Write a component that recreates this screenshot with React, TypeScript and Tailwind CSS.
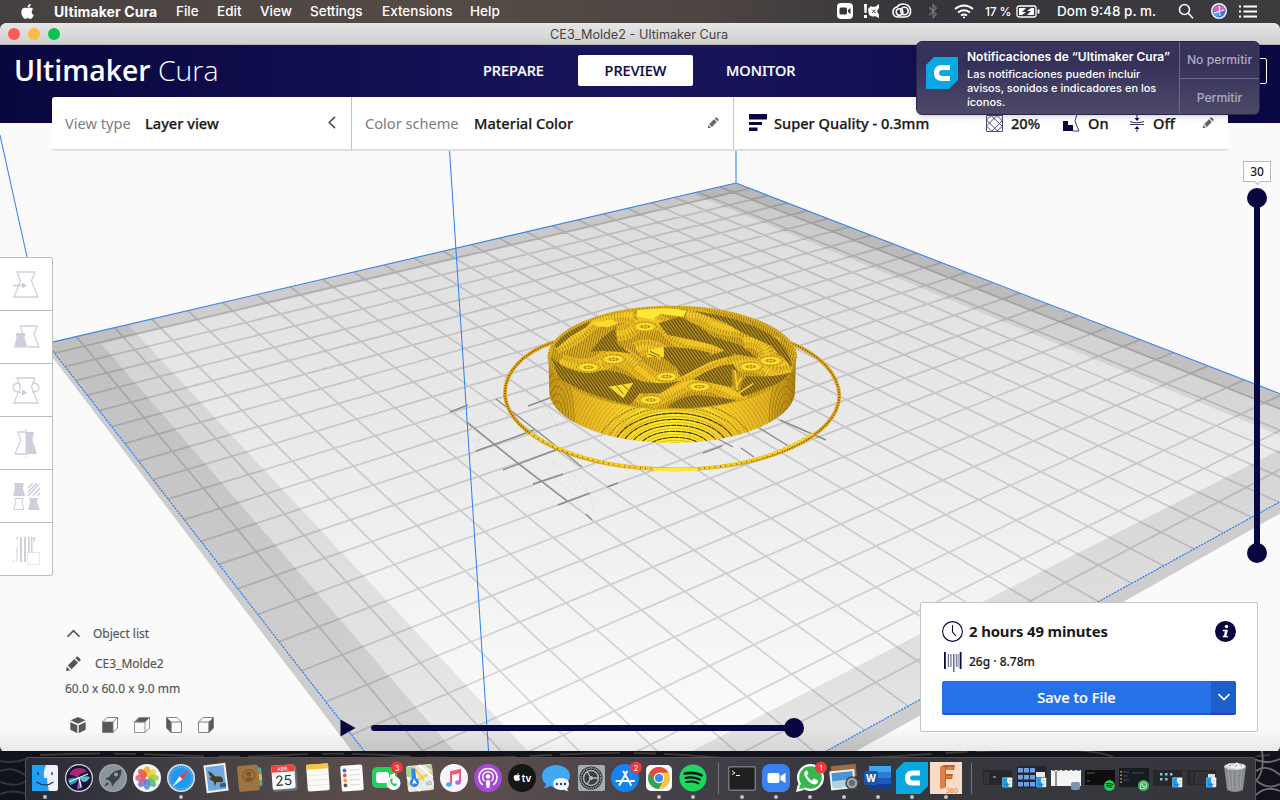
import React from "react";
import { FaApple, FaSpotify, FaWhatsapp, FaBluetoothB } from "react-icons/fa";

type Pt = [number, number];

/* ---------- build plate projection ---------- */
const SIZE = 235;
const B: Pt = [736, 183];
const L: Pt = [47, 343.4];
const F: Pt = [502.6, 929];
const R: Pt = [1395.3, 438.4];

const dx1 = L[0] - F[0], dx2 = R[0] - F[0], sx = B[0] - L[0] + F[0] - R[0];
const dy1 = L[1] - F[1], dy2 = R[1] - F[1], sy = B[1] - L[1] + F[1] - R[1];
const den = dx1 * dy2 - dx2 * dy1;
const g = (sx * dy2 - dx2 * sy) / den;
const h = (dx1 * sy - sx * dy1) / den;

function project(um: number, vm: number): Pt {
  const u = um / SIZE, v = vm / SIZE;
  const w = g * u + h * v + 1;
  return [
    ((L[0] - B[0] + g * L[0]) * u + (R[0] - B[0] + h * R[0]) * v + B[0]) / w,
    ((L[1] - B[1] + g * L[1]) * u + (R[1] - B[1] + h * R[1]) * v + B[1]) / w,
  ];
}
const poly = (pts: Pt[]) =>
  "M" + pts.map(([u, v]) => project(u, v).map((n) => n.toFixed(1)).join(",")).join("L") + "Z";

const gridSteps = Array.from({ length: 23 }, (_, i) => 7.5 + i * 10);
const gridPath = gridSteps
  .map((s) => {
    const [a, b, c, d] = [project(s, 0), project(s, SIZE), project(0, s), project(SIZE, s)];
    return `M${a}L${b}M${c}L${d}`;
  })
  .join("");

const skirt = "M220,157 C120,190 72,255 75,315 C85,440 300,538 580,538 C860,538 1078,440 1078,315 C1075,255 1025,195 928,157";

function Model() {
  const side = "M205,190 L208,310 A369,157 0 0 0 945,310 L948,190 A371,153 0 0 1 205,190Z";
  const dark = [
    "M535,100 L600,80 650,105 700,140 780,165 835,205 750,190 700,165 640,150 565,135Z",
    "M640,62 Q800,85 880,140 Q930,175 935,230 L905,200 870,165 790,130 730,95Z",
    "M552,172 Q620,168 695,190 L655,215 595,238 552,205Z",
    "M330,185 L365,145 405,115 412,160 450,190 Q380,180 330,185Z",
    "M212,195 Q240,235 300,245 Q400,230 460,265 Q520,290 600,272 L540,310 480,310 450,345 Q300,310 235,262Z",
    "M640,268 Q700,225 760,222 L775,245 755,292 Q700,280 640,268Z",
    "M765,300 L800,258 Q880,265 938,245 Q920,275 860,292 L790,320Z",
    "M560,352 Q600,318 650,315 Q720,322 770,330 Q700,355 620,357Z",
    "M215,150 Q270,95 340,85 L320,110 270,140 230,175Z",
    "M590,235 L660,205 740,180 760,195 690,215 600,262Z",
  ];
  const waves = [
    "M225,170 Q280,150 320,110 T460,75",
    "M240,215 Q330,250 400,200 Q450,215 500,255 T620,250 Q690,210 740,200",
    "M290,235 Q350,240 395,185 Q440,195 470,225",
    "M410,130 Q450,130 470,100 T560,110 Q580,150 640,160 T745,180",
    "M620,75 Q660,75 690,95 T790,120 Q830,160 900,165",
    "M470,180 Q500,160 550,190",
    "M500,340 Q560,310 610,285 T760,310 L800,320",
    "M720,245 Q800,190 860,240 Q890,270 930,240",
    "M380,290 Q440,280 480,320",
    "M790,150 Q850,145 860,190 T930,215",
  ];
  return (
    <g transform="translate(480,290) scale(0.33333)">
      <path d={skirt} fill="none" stroke="#dfa81f" strokeWidth="11" />
      <path d={skirt} fill="none" stroke="#4b3b0c" strokeWidth="5" strokeDasharray="3 5" opacity=".8" />
      <path d="M150,430 Q330,538 580,538 Q830,538 1000,430" fill="none" stroke="#f2cf2a" strokeWidth="9" strokeDasharray="13 3" />
      <path d="M522,539 H652" stroke="#ffe735" strokeWidth="10" />
      <path d={side} fill="url(#side)" />
      <g clipPath="url(#sideClip)" fill="none">
        {Array.from({ length: 26 }, (_, i) => (
          <ellipse key={`t${i}`} cx="585" cy="480" rx={160 + i * 10} ry={100 + i * 12}
            stroke="#9a7409" strokeWidth="2.4" strokeDasharray="5 3" opacity=".75" />
        ))}
        {Array.from({ length: 7 }, (_, i) => (
          <ellipse key={`h${i}`} cx="585" cy="480" rx={48 + i * 24} ry={11 + i * 18}
            stroke="#dcaa1a" strokeWidth="2.500" />
        ))}
        {Array.from({ length: 8 }, (_, i) => (
          <ellipse key={`d${i}`} cx="585" cy="480" rx={60 + i * 25} ry={20 + i * 18}
            stroke="#3d3205" strokeWidth={i < 6 ? 3.400 : 2.600} strokeDasharray={i < 6 ? "16 1.500" : "7 3"} opacity={i < 6 ? 1 : 0.75} />
        ))}
        {Array.from({ length: 6 }, (_, i) => (
          <g key={i} stroke="#5a4508" strokeWidth="2.2" opacity=".55">
            <ellipse cx="232" cy="385" rx={10 + i * 8} ry={30 + i * 22} />
            <ellipse cx="918" cy="385" rx={10 + i * 8} ry={30 + i * 22} />
          </g>
        ))}
      </g>
      <ellipse cx="577" cy="204" rx="370" ry="152" fill="#dbab22" />
      <g clipPath="url(#topClip)">
        <rect x="200" y="40" width="760" height="330" fill="url(#fine)" />
        {waves.map((d, i) => (
          <g key={i} fill="none">
            <path d={d} stroke="#ebbb24" strokeWidth="46" />
            <path d={d} stroke="#4a390a" strokeWidth="40" strokeDasharray="2.5 6" opacity=".38" />
            <path d={d} stroke="#f3cb29" strokeWidth="16" strokeDasharray="6 3" />
          </g>
        ))}
        {dark.map((d, i) => (
          <g key={i}>
            <path d={d} fill="#b8921f" />
            <path d={d} fill="url(#hatch)" />
          </g>
        ))}
        <path d="M470,62 Q520,45 620,62 L610,80 540,72 520,88 472,80Z" fill="#ffe832" />
        <path d="M335,98 L395,88 415,100 385,112 350,108Z M455,112 Q490,95 540,110 Q500,128 455,112Z M505,180 L550,170 552,200 500,202Z M385,290 L460,278 430,325Z" fill="#fadc2d" />
        <path d="M392,295 L415,318 M410,288 L430,312 M428,284 L445,300 M510,184 L540,198 M505,192 L530,201" stroke="#745b0c" strokeWidth="3" />
        {([[560, 260], [658, 290], [812, 230], [495, 110], [400, 208], [325, 232], [512, 330], [872, 212]] as Pt[]).map(([x, y], i) => (
          <g key={i} fill="none" stroke="#6b530a" strokeWidth="2" strokeDasharray="6 4">
            <ellipse cx={x} cy={y} rx="42" ry="17" fill="#edc126" stroke="none" />
            <ellipse cx={x} cy={y} rx="36" ry="14" />
            <ellipse cx={x} cy={y} rx="23" ry="8" stroke="#ffe933" strokeWidth="5" strokeDasharray="none" />
            <ellipse cx={x} cy={y} rx="13" ry="4" />
          </g>
        ))}
        <path d="M755,235 L790,260 778,310 758,290Z" fill="#c4951d" />
        <path d="M765,240 L772,300 M785,262 L768,290 M775,310 L820,280" stroke="#f6d12b" strokeWidth="5" />
      </g>
      <path d="M206,204 A371,153 0 0 1 948,204" fill="none" stroke="#e8b924" strokeWidth="8" />
      <path d="M206,204 A371,153 0 0 1 948,204" fill="none" stroke="#544208" strokeWidth="6" strokeDasharray="2.5 5" opacity=".5" />
      <path d="M206,204 A371,153 0 0 0 948,204" fill="none" stroke="#c79a1c" strokeWidth="2.500" />
    </g>
  );
}

function Scene() {
  const plate: Pt[] = [[0, 0], [SIZE, 0], [SIZE, SIZE], [0, SIZE]];
  return (
    <svg className="absolute inset-0 h-full w-full" viewBox="0 45 1280 706" aria-hidden="true">
      <defs>
        <linearGradient id="plate" gradientUnits="userSpaceOnUse" x1="0" y1="183" x2="0" y2="751">
          <stop offset="0" stopColor="#dadada" />
          <stop offset=".35" stopColor="#e7e7e7" />
          <stop offset=".7" stopColor="#f2f2f2" />
          <stop offset="1" stopColor="#fcfcfc" />
        </linearGradient>
        <linearGradient id="side" x1="0" x2="1" y1="0" y2="0">
          <stop offset="0" stopColor="#b98c14" />
          <stop offset=".1" stopColor="#e2b021" />
          <stop offset=".3" stopColor="#f6cf29" />
          <stop offset=".5" stopColor="#fff030" />
          <stop offset=".7" stopColor="#f6cf29" />
          <stop offset=".9" stopColor="#e0ae21" />
          <stop offset="1" stopColor="#a87f12" />
        </linearGradient>
        <linearGradient id="vignette" x1="0" x2="0" y1="0" y2="1">
          <stop offset="0" stopColor="#000" stopOpacity="0" />
          <stop offset="1" stopColor="#000" stopOpacity=".07" />
        </linearGradient>
        <pattern id="hatch" width="8" height="8" patternUnits="userSpaceOnUse" patternTransform="rotate(-35)">
          <rect width="3.6" height="8" fill="#4d3d0a" opacity=".9" />
        </pattern>
        <pattern id="fine" width="7" height="7" patternUnits="userSpaceOnUse" patternTransform="rotate(12)">
          <rect width="2.5" height="7" fill="#6d540c" opacity=".6" />
        </pattern>
        <clipPath id="sideClip"><path d="M205,190 L208,310 A369,157 0 0 0 945,310 L948,190 A371,153 0 0 1 205,190Z" /></clipPath>
        <clipPath id="topClip"><ellipse cx="577" cy="204" rx="370" ry="152" /></clipPath>
      </defs>
      <rect x="0" y="45" width="1280" height="706" fill="#fafafa" />
      <path d="M47,343 V350 L352,751 502,948 860,749 1123,602 1280,513.5 1400,446 V430Z" fill="#cdcdcd" />
      <path d={poly(plate)} fill="url(#plate)" />
      <path fillRule="evenodd" fill="#000" opacity=".09"
        d={poly(plate) + poly([[8, 8.5], [223.5, 8.5], [223.5, 222.5], [8, 222.5]])} />
      <path fill="#000" opacity=".075"
        d={poly([[0, 0], [20, 0], [20, SIZE], [0, SIZE]]) + poly([[214, 0], [SIZE, 0], [SIZE, SIZE], [214, SIZE]])} />
      <path d={gridPath} stroke="#000" strokeOpacity=".14" strokeWidth="1.8" fill="none" />
      <path d={`M${project(SIZE, 0)}L${B}L${R}`} fill="none" stroke="#3b82e8" strokeWidth="1.1" />
      <path d={`M${L}L${F}L${R}`} fill="none" stroke="#2f80f0" strokeWidth="1.200" strokeDasharray="2.200 1" />
      <path d="M0,135 L27,257 M449.500,150 L488.500,751 M736,150 V183" stroke="#2f7df0" strokeWidth="1" fill="none" />
      <g stroke="#8c8c8c" strokeWidth="1.4" fill="none">
        <path d="M467,422 L516,462 567,501 M496,399 L528,424 560,449 582,467 M476,451 L534,430 M503,470 L558,449 M533,484 L563,474 M558,505 L590,493 M586,514 L592,520 M528,406 L558,395 M607,487 L618,483 M450,412 L468,405 M753,424 L790,447 M780,420 L826,440 M718,439 L733,447 M703,453 L722,446 M741,448 L754,457" />
      </g>
      <g stroke="#c9c9c9" strokeWidth="1" strokeDasharray="1 2" fill="none">
        <path d="M470,458 Q480,440 492,412 M552,462 Q590,480 594,512 M545,472 Q575,490 582,512 M455,440 H480 M540,400 Q556,418 558,432" />
      </g>
      <Model />
      <rect x="0" y="728" width="1280" height="23" fill="url(#vignette)" />
    </svg>
  );
}

/* ---------- small icons ---------- */
const Pencil = ({ className = "" }: { className?: string }) => (
  <svg viewBox="0 0 16 16" className={className} fill="currentColor"><path d="M1 15l.8-4.2 3.6 3.5L1 15zM2.8 9.500l6.500-6.500 3.800 3.800-6.500 6.500zM10.300 2l1.300-1.300q.7-.6 1.400 0L15.400 3q.6.700 0 1.400L14.100 5.800z" /></svg>
);
const Chevron = ({ d, className = "" }: { d: string; className?: string }) => (
  <svg viewBox="0 0 12 12" className={className} fill="none" stroke="currentColor" strokeWidth="1.6"><path d={d} /></svg>
);

const trap = "M4 1h18l-3.500 9L25 26H1l6.500-16z";
const tools: React.ReactNode[] = [
  <g key="m"><path d={trap} fill="none" stroke="#d0cfdd" strokeWidth="1.300" /><path d="M0 14.500h10" stroke="#c9c8d8" strokeWidth="1.300" /><path d="M9 11.700l5 2.800-5 2.800z" fill="#c9c8d8" /></g>,
  <g key="s"><path d="M7 2h17l-3 8 5 13H14M10 10L7 2" fill="none" stroke="#d0cfdd" strokeWidth="1.300" /><path d="M2.500 9h10l-1 5 3 9.500H1l2.500-9.500z" fill="#d0cedd" /></g>,
  <g key="r"><path d={trap} fill="none" stroke="#d0cfdd" strokeWidth="1.300" /><path d="M7 6Q0 6 0 10.500T8 15.500M19 6q7 0 7 4.500t-7 4.500" fill="none" stroke="#d0cfdd" strokeWidth="1.300" /><path d="M9 12.500l5 3-5 3z" fill="#c9c8d8" /></g>,
  <g key="f"><path d="M13 2H5l2.500 8L2 24h11" fill="none" stroke="#d0cfdd" strokeWidth="1.300" /><path d="M13 2h8l-1.500 8L24 24H13z" fill="#d0cedd" /><path d="M13-1v28" stroke="#d0cedd" /></g>,
  <g key="p" fill="#d0cedd"><path d="M1 0h10l-1 5 2 8H0l2-8zM16 15h9l-1 4 3 8H15l2-8z" /><path d="M2 15.500h8l-1 4 2 7H.800l2-7z" fill="none" stroke="#d0cedd" /><path d="M15 5l5-5M15 9l9-9M15 13L26 1M20 13l7-8M24 13l3-3" stroke="#d0cedd" strokeWidth="1.500" /></g>,
  <g key="b" fill="#d0cedd"><path d="M3 1h2v4zM7 1h2v25H7zM11 1h2v25h-2zM15 1h1.800v20H15zM18 1h1.500v15H18zM20.500 1h2l-1 5h-1zM4.500 8v18H3.500V13zM1 22v4H0z" /><path d="M14.500 16.500h12v12h-12z" fill="#fff" stroke="#c5c3d5" strokeDasharray="1 1.500" /></g>,
];

/* ---------- dock ---------- */
const Sq = ({ x = 1, y = 1, w = 26, h: hh = 26, r = 2, fill }: { x?: number; y?: number; w?: number; h?: number; r?: number; fill: string }) => (
  <rect x={x} y={y} width={w} height={hh} rx={r} fill={fill} />
);
const Badge = ({ n }: { n: string }) => (
  <g><circle cx="25" cy="3.500" r="6" fill="#f0373c" /><text x="25" y="6.500" fontSize="8" fill="#fff" textAnchor="middle">{n}</text></g>
);
const finder = (
  <g><Sq fill="#eef2f6" /><path d="M1 3q0-2 2-2h12q-3 7-2 13h3q0 6 2 13H3q-2 0-2-2z" fill="#1f9ff5" /><path d="M7 8v3M21 8v3M5.500 18q8.500 6 17 0" fill="none" stroke="#1c2a4a" strokeWidth="1.200" /></g>
);
const miniFinder = <g transform="translate(19,13) scale(.38)">{finder}</g>;
const petals = ["#f7a325", "#e9d431", "#9ccb3c", "#54b57a", "#4b8fd6", "#8a6cc0", "#d95a86", "#ef5434"];

type DockItem = { id: string; dot?: boolean; art: React.ReactNode };
const apps: DockItem[] = [
  { id: "finder", dot: true, art: finder },
  { id: "siri", art: <g><circle cx="14" cy="14" r="14" fill="#d8d8df" /><circle cx="14" cy="14" r="12.800" fill="#1c1433" /><path d="M4 11q3-7 10-7 6 0 8 4-8 0-9 6-5-4-9-3z" fill="#a62a78" /><path d="M3 15q6-2 11-1-3 6-9 7z" fill="#2a9fae" /><path d="M14 14q6-3 11-1-2 5-7 5z" fill="#55b9d8" /><path d="M14 14q3 5 3 10l-5 1z" fill="#8f5ad0" /><path d="M4 18l9-4 10-4M14 14l2 9" stroke="#e6f6ff" strokeWidth="1.300" fill="none" /></g> },
  { id: "launchpad", art: <g><circle cx="14" cy="14" r="14" fill="#a2aaaf" /><circle cx="14" cy="14" r="12.800" fill="#8b9499" /><path d="M22.500 5.500q-8 .5-12 7L6 15l3.500 1 3 3 .5 4 3-4.500q6.500-4 6.500-13zM8 18l-3 5 5-3z" fill="#3c4347" /><circle cx="17" cy="10.500" r="2" fill="#98a1a6" /></g> },
  { id: "photos", art: <g><circle cx="14" cy="14" r="14" fill="#f6f6f4" />{petals.map((c, i) => <ellipse key={c} cx="14" cy="7.500" rx="3.400" ry="5.300" fill={c} opacity=".85" transform={`rotate(${i * 45} 14 14)`} />)}</g> },
  { id: "safari", dot: true, art: <g><circle cx="14" cy="14" r="14" fill="#dbe3ea" /><circle cx="14" cy="14" r="12.500" fill="#2098ee" /><circle cx="14" cy="14" r="11" fill="none" stroke="#a9dcfb" strokeWidth="1.500" strokeDasharray=".6 1.500" /><path d="M23 5L12.500 12.300l3 3z" fill="#f0403a" /><path d="M5 23l7.500-10.700 3 3z" fill="#f5f5f5" /></g> },
  { id: "mail", art: <g transform="rotate(-7 14 14)"><Sq x={3} y={0} w={22} h={28} r={0} fill="#f1f1ee" /><Sq x={5} y={2} w={18} h={24} r={0} fill="#6fa9dd" /><path d="M7 6q4 2 6 6l6 1q3 3 1 6l-6-1-2 4-1-5q-3-1-4-4l3 0q-3-3-3-7z" fill="#4d3a25" /><path d="M17 20h6v4h-6z" fill="#2d5e91" /></g> },
  { id: "contacts", art: <g transform="rotate(-5 14 14)"><Sq x={22} y={4} w={4} h={19} fill="#55a99b" /><path d="M22 11h4v6h-4z" fill="#e8b23c" /><Sq x={2} y={1} w={21} h={26} fill="#9f7440" /><circle cx="13" cy="11.500" r="6" fill="none" stroke="#7b5730" /><circle cx="13" cy="10" r="2.500" fill="#7b5730" /><path d="M9 15q4-4 8 0l-2 2h-4z" fill="#7b5730" /></g> },
  { id: "calendar", art: <g transform="rotate(-4 14 14)"><Sq x={2} y={2} w={25} h={25} fill="#66717a" /><Sq x={2} y={1} w={23} h={24} fill="#fbfbfb" /><path d="M2 1h23v7H2z" fill="#e8453f" /><text x="13.500" y="6.500" fontSize="5" fill="#fff" textAnchor="middle">ABR.</text><text x="13.500" y="21.500" fontSize="14" fill="#333" textAnchor="middle">25</text></g> },
  { id: "notes", art: <g transform="rotate(-4 14 14)"><Sq x={3} y={0} w={22} h={27} fill="#fbfaf5" /><path d="M3 0h22v5H3z" fill="#f5c33c" /><path d="M4 11h20M4 16h20M4 21h20" stroke="#e3e0d8" strokeWidth=".7" /></g> },
  { id: "reminders", art: <g transform="rotate(-4 14 14)"><Sq x={3} y={1} w={22} h={26} fill="#fcfcfc" />{["#2d7be5", "#ee4c43", "#f29a38", "#555"].map((c, i) => <g key={c}><circle cx="7" cy={6 + i * 5} r="1.900" fill={c} /><path d={`M11 ${6 + i * 5}h11`} stroke="#ccc" strokeWidth=".7" /></g>)}</g> },
  { id: "facetime", art: <g><Sq x={0} y={3} w={25} h={21} r={5} fill="#25cf5c" /><Sq x={4} y={8} w={13} h={11} r={3} fill="#fff" /><path d="M18 11l5-2v9l-5-2z" fill="#fff" /><circle cx="21.500" cy="19" r="7" fill="#f6fff8" /><path d="M18 16q1 6 6 6l1-2-2-1-1 1q-2-1-2-3l1-1-1-2z" fill="#2cc45c" /><Badge n="3" /></g> },
  { id: "maps", art: <g transform="rotate(-5 14 14)"><Sq fill="#e9eadf" /><path d="M1 2h7v12l-7-3zM20 2h7v6z" fill="#a6d68b" /><path d="M8 2l16 24M1 20L27 9" stroke="#f4cf59" strokeWidth="2.500" /><path d="M8 4v15" stroke="#2786f2" strokeWidth="4" /><path d="M1 12l12 15M14 1l13 14" stroke="#fff" strokeWidth="2" /><circle cx="8" cy="18" r="4.500" fill="#2c83ef" /><path d="M8 14l2.500 6L8 18.500 5.500 20z" fill="#fff" /><circle cx="22" cy="20" r="5.500" fill="#e9eff6" /><text x="22" y="22" fontSize="5" textAnchor="middle" fill="#678">3D</text></g> },
  { id: "music", art: <g><circle cx="14" cy="14" r="14" fill="#f8f5f8" /><path d="M11 20V8l9-2v12" fill="none" stroke="#ec5a7d" strokeWidth="2" /><path d="M11 9.500l9-2" stroke="#ec5a7d" strokeWidth="3" /><ellipse cx="9" cy="20.500" rx="2.800" ry="2.200" fill="#4fa4ec" /><ellipse cx="18" cy="18.500" rx="2.800" ry="2.200" fill="#b26ae5" /></g> },
  { id: "podcasts", art: <g><circle cx="14" cy="14" r="14" fill="#a947d6" /><g fill="none" stroke="#fff" strokeWidth="1.500"><path d="M9 21a9 9 0 1 1 10 0M10.500 17a5.300 5.300 0 1 1 7 0" /></g><circle cx="14" cy="12.500" r="2.300" fill="#fff" /><path d="M11.800 17q2.200-2 4.400 0l-.8 7h-2.800z" fill="#fff" /></g> },
  { id: "tv", art: <g><circle cx="14" cy="14" r="14" fill="#161616" /><g transform="translate(4.500,8.500)"><FaApple size={9} color="#fff" /></g><text x="18.500" y="17.500" fontSize="10" fontWeight="600" fill="#fff" textAnchor="middle">tv</text></g> },
  { id: "messages", art: <g><path d="M14 1C6 1 0 6 0 12q0 5 4 8-.5 3-3 4 5 0 7-2 3 1 6 1c8 0 14-5 14-11S22 1 14 1z" fill="#3fa9f5" /><path d="M19 14q8 0 8 6 0 3-2 4.500.3 1.500 1.500 2.500-3 0-4-1.300-11 1.300-11.500-5.700 0-6 8-6z" fill="#f2f9ff" /><g fill="#337"><circle cx="15" cy="20" r="1.200" /><circle cx="19" cy="20" r="1.200" /><circle cx="23" cy="20" r="1.200" /></g></g> },
  { id: "settings", art: <g><Sq w={27} fill="#a3adb4" /><circle cx="14" cy="14" r="11.500" fill="#2f3234" /><circle cx="14" cy="14" r="10" fill="none" stroke="#a9aeb1" strokeWidth="1.500" strokeDasharray="1 .8" /><circle cx="14" cy="14" r="7.500" fill="#3b3d3f" stroke="#b0b5b8" strokeWidth="1.500" /><path d="M14 14L21 14M14 14l-4-6.500M14 14l-4 6.500" stroke="#b6babc" strokeWidth="1.400" /><circle cx="14" cy="14" r="2" fill="#bbb" /></g> },
  { id: "appstore", art: <g><circle cx="14" cy="14" r="14" fill="#1583ee" /><path d="M8.500 21L16 7.500M12.500 7.500L20 21M5.500 17h12M20 17h3" stroke="#fff" strokeWidth="2" strokeLinecap="round" /><Badge n="2" /></g> },
  { id: "chrome", dot: true, art: <g><Sq r={5} fill="#fafafa" /><circle cx="14" cy="14" r="11" fill="#f5c73a" /><path d="M4.500 8.500A11 11 0 0 1 23.500 8.500H14L9.300 16.800z" fill="#e24a3d" /><path d="M4.500 8.500A11 11 0 0 0 13.500 25l5-8.500H9.300z" fill="#2fa258" /><circle cx="14" cy="14" r="5.200" fill="#fff" /><circle cx="14" cy="14" r="4.100" fill="#4486ef" /></g> },
  { id: "spotify", dot: true, art: <g><circle cx="14" cy="14" r="13" fill="#111" /><FaSpotify size={28} color="#1ed760" /></g> },
];
const apps2: DockItem[] = [
  { id: "terminal", dot: true, art: <g><Sq x={0} y={2} w={28} h={25} fill="#73777b" /><Sq x={1.5} y={3.5} w={25} h={22} r={1} fill="#1e2022" /><path d="M4 7l3 1.800-3 1.800M8 11.500h4" fill="none" stroke="#eee" /></g> },
  { id: "zoom", dot: true, art: <g><Sq x={0} y={0} w={28} h={28} r={8} fill="#3a82f0" /><Sq x={5.5} y={9} w={12} h={10} fill="#fff" /><path d="M18.500 12l5-3v10l-5-3z" fill="#fff" /></g> },
  { id: "whatsapp", dot: true, art: <g><circle cx="14.500" cy="13.500" r="13.500" fill="#fff" /><path d="M0 28l2-8 6 6z" fill="#fff" /><circle cx="14.500" cy="13.500" r="11.300" fill="#39b54f" /><path d="M3 25l2-6 4 5z" fill="#39b54f" /><g transform="translate(4,2.500)"><path d="M6 4q-3 2-1 6 3 6 9 8 4 0 4-4l-4-2-2 2q-3-1-5-5l1.500-2L7 4z" fill="#fff" /></g><Badge n="1" /></g> },
  { id: "preview", dot: true, art: <g><g transform="rotate(-6 14 14)"><Sq x={2} y={1} w={25} h={12} r={0} fill="#9a6d47" /><Sq x={0} y={6} w={25} h={19} r={0} fill="#f3f3f0" /><Sq x={2} y={8} w={21} h={15} r={0} fill="#4d93d1" /><path d="M2 16h21v7H2z" fill="#b6d1df" /></g><circle cx="22" cy="19" r="6" fill="#9fa8ad" stroke="#4a4a4a" strokeWidth="1.500" /><circle cx="22" cy="19" r="3" fill="#5e6c78" /></g> },
  { id: "word", dot: true, art: <g><Sq x={5} y={2} w={22} h={24} fill="#2b7cd3" /><path d="M5 2h22v6H5z" fill="#41a5ee" /><path d="M5 14h22v6H5z" fill="#185abd" /><path d="M5 20h22v6H5z" fill="#103f91" /><Sq x={0} y={7} w={14} h={14} fill="#1a55b0" /><text x="7" y="17.500" fontSize="10" fontWeight="700" fill="#fff" textAnchor="middle">W</text></g> },
  { id: "cura", dot: true, art: <g><path d="M6-2h24v24l-8 8H-2V6z" fill="#09a7e0" /><path d="M22 6.500h-8q-7 0-7 7.500t7 7.500h8v-5h-7q-3 0-3-2.500t3-2.500h7z" fill="#fff" /></g> },
  { id: "fusion", dot: true, art: <g><Sq x={-2} y={-2} w={32} h={32} r={0} fill="#f9dcc6" /><path d="M8 3l4-2h11l-1 5h-8v4h7l-1 5h-6v8l-5 2-1-2z" fill="#c0622a" /><path d="M8 3l5 0v20l-4 2-1-2zM13 6l3-3h6l-2 3zM14 12h6l-1 2h-5z" fill="#dd8345" /><text x="20" y="28.500" fontSize="6.500" fill="#d4783a" textAnchor="middle">360</text></g> },
];
const minis: DockItem[] = [
  { id: "m1", art: <g><Sq x={0} y={6} w={29} h={15} r={0} fill="#27272a" /><path d="M1 8h5v12H1z" fill="#343438" /><path d="M10 12h3v2h-3z" fill="#3f86a5" />{miniFinder}</g> },
  { id: "m2", art: <g><Sq x={0} y={2} w={29} h={22} r={0} fill="#23262d" />{[0, 1, 2, 3, 4, 5, 6, 7, 8].map((i) => <Sq key={i} x={1 + (i % 3) * 6} y={4 + Math.floor(i / 3) * 7} w={5} h={4.5} r={0} fill="#6f9fe0" />)}<Sq x={19} y={8} w={9} h={5} r={0} fill="#e9e9e9" />{miniFinder}</g> },
  { id: "m3", art: <g><Sq x={0} y={6} w={30} h={16} r={0} fill="#f4f4f4" /><path d="M5 7v15" stroke="#333" /><path d="M1 6.500h28" stroke="#777" strokeDasharray="3 2" /><Sq x={20} y={18} w={9} h={8} fill="#7b95b0" /></g> },
  { id: "m4", art: <g><Sq x={0} y={6} w={30} h={15} r={0} fill="#0e0e10" /><path d="M2 9h8M2 17h3" stroke="#665a52" /><g transform="translate(19,16)"><circle cx="5.500" cy="5.500" r="5" fill="#111" /><FaSpotify size={11} color="#1ed760" /></g></g> },
  { id: "m5", art: <g><Sq x={0} y={4} w={30} h={19} r={0} fill="#161d21" /><path d="M2 7v14" stroke="#d3ac5c" strokeWidth="1.500" strokeDasharray="1.500 2" /><path d="M4 8h6M4 12h5M4 16h6M13 9h12" stroke="#454e56" /><circle cx="24.500" cy="21.500" r="5.500" fill="#2fb84f" /><g transform="translate(20.500,17.500)"><FaWhatsapp size={8} color="#fff" /></g></g> },
  { id: "m6", art: <g><Sq x={0} y={6} w={29} h={16} r={0} fill="#27272a" />{[0, 1, 2, 3, 4].map((i) => <Sq key={i} x={7 + (i % 3) * 5} y={9 + Math.floor(i / 3) * 5} w={2.500} h={2.500} r={0} fill="#7dc4e4" />)}{miniFinder}</g> },
  { id: "m7", art: <g><Sq x={0} y={6} w={29} h={15} r={0} fill="#29292c" /><path d="M5 8v12M9 9h14v10H9z" stroke="#404044" fill="#323236" /><Sq x={21} y={10} w={7} h={5} r={0} fill="#ddd" />{miniFinder}</g> },
];

const DockIcon = ({ app }: { app: DockItem }) => (
  <div className="flex w-[34.1px] shrink-0 flex-col items-center pt-[6px]">
    <svg viewBox="0 0 28 28" className="h-7 w-7 overflow-visible" fontFamily="Inter, sans-serif">{app.art}</svg>
    <span className={app.dot ? "mt-[3px] h-1 w-1 rounded-full bg-[#c4c2c4]" : "h-1"} />
  </div>
);

const Dock = () => (
  <div className="relative flex h-[49px] shrink-0 overflow-hidden bg-[#12131a] pl-[25px] pt-[6px]">
    <svg className="absolute inset-0 h-full w-full" viewBox="0 0 1280 49" fill="none">
      <path d="M0 10q14 3 26-2M0 20q12-5 25 4M0 31q15 6 26-1M0 43q15-6 30 2" stroke="#2f363f" strokeWidth="2" />
      <path d="M40 4q60-3 130 0t120 0 110 1 150-1 160 2 220-3 180 2 160-1" stroke="#3f3934" strokeWidth="1.800" strokeDasharray="60 14 22 8" />
      <path d="M1254 8q12 6 26 0M1256 20q10-8 24 4M1254 28q14 12 26 5M1256 44q10-10 24-4M1262 0q3 20-6 30" stroke="#726a72" strokeWidth="1.800" />
    </svg>
    <div className="relative flex h-[46px] w-[1231px] rounded-t-[4px] border border-b-0 border-[#55535a] bg-[linear-gradient(90deg,#272a35_0%,#3d3b42_10%,#5a4d4b_27%,#5b4e4d_38%,#45414a_52%,#38383f_65%,#35353c_100%)] pl-[2px]">
      {apps.map((a) => <DockIcon key={a.id} app={a} />)}
      <div className="ml-[8px] mr-[6px] mt-[5px] h-[31px] w-px shrink-0 bg-[#77757b]" />
      {apps2.map((a) => <DockIcon key={a.id} app={a} />)}
      <div className="mx-[7.500px] mt-[5px] h-[31px] w-px shrink-0 bg-[#77757b]" />
      {minis.map((a) => <DockIcon key={a.id} app={a} />)}
      <svg viewBox="0 0 24 30" className="ml-[5px] mt-1 h-[30px] w-6 shrink-0"><path d="M1 4l3 24q8 4 16 0L23 4z" fill="#8a8c8e" /><path d="M5 6l2 22M9 7l1 22M14 7v22M19 6l-2 22" stroke="#a0a3a5" /><ellipse cx="12" cy="4.500" rx="11" ry="3.500" fill="#cfd2d4" /><path d="M3 4l4-3 3 3 4-4 3 4 4-2v4l-8 1z" fill="#f2f2f2" /><path d="M6 4l2-1M12 5l2-2M18 4h1" stroke="#b4674b" /></svg>
    </div>
  </div>
);

const cubes = [
  <g key="0" fill="#595959"><path d="M8 0l7.500 3.300L8 6.800.500 3.300z" /><path d="M.3 5l7 3.200v8L.3 12.800zM15.700 5l-7 3.200v8l7-3.400z" /></g>,
  <g key="1" fill="none" stroke="#777" strokeWidth=".9"><path d="M5 .5h10.500v10.500l-4.500 4.500M5 .5L.5 5M11 5l4.500-4.500" /><path d="M.5 5H11v10.500H.5z" fill="#595959" /></g>,
  <g key="2" fill="none" stroke="#8a8a8a" strokeWidth=".9"><path d="M.5 5H11v10.500H.5zM11 15.500l4.500-4.500V.5" /><path d="M5 .5h10.500L11 5H.5z" fill="#595959" /></g>,
  <g key="3" fill="none" stroke="#777" strokeWidth=".9"><path d="M5 5h10.500v10.500H5zM.5.5H11L15.500 5" /><path d="M.5.5L5 5v10.500L.5 11z" fill="#595959" /></g>,
  <g key="4" fill="none" stroke="#777" strokeWidth=".9"><path d="M.5 5H11v10.500H.5zM.5 5L5 .5h10.500" /><path d="M15.500.5V11L11 15.500V5z" fill="#595959" /></g>,
];

const MenuBar = () => (
  <div className="flex h-[23px] shrink-0 items-center bg-[linear-gradient(90deg,#464140_0%,#554b46_35%,#4d4542_55%,#35353b_72%,#3e3b3e_100%)] pb-px font-['Inter',sans-serif] text-[13.500px] font-medium text-white">
    <FaApple className="ml-5 h-[17px] w-[15px]" />
    <span className="ml-[19px] w-[122px] whitespace-nowrap text-[14px] font-bold tracking-[0.1px]">Ultimaker Cura</span>
    <span className="w-[41px]">File</span>
    <span className="w-[43px]">Edit</span>
    <span className="w-[50px]">View</span>
    <span className="w-[72px]">Settings</span>
    <span className="w-[88px]">Extensions</span>
    <span className="w-[60px]">Help</span>
    <div className="ml-auto flex items-center">
      <svg viewBox="0 0 16 16" className="h-4 w-4"><rect width="16" height="16" rx="4" fill="#fff" /><rect x="2.500" y="4.500" width="7.500" height="7" rx="1.500" fill="#38363a" /><path d="M11 7l2.500-2v6L11 9z" fill="#38363a" /></svg>
      <svg viewBox="0 0 17 16" className="ml-[10px] h-4 w-[17px]"><path d="M1 1h3l-.5 9h-2zM1 12h3v3H1zM5 6l3-3 1 1q2-1 3 0l4-3v4l-2 3 2 4v3l-4-2q-2 1-4 0l-2-1z" fill="#fff" /><path d="M9 6.500l3.500 3.500M12.500 6.500L9 10" stroke="#444" /></svg>
      <svg viewBox="0 0 20 16" className="ml-3 h-4 w-5" fill="none" stroke="#fff" strokeWidth="1.600"><path d="M6 14q-5 0-5-5 0-4 4-5 2-3 6-3 6 0 7.500 5.500 1 7.500-6 7.500z" /><circle cx="7.500" cy="9" r="3.300" /><circle cx="12.500" cy="8" r="3.700" /></svg>
      <FaBluetoothB className="ml-[15px] h-4 w-3 text-[#77757a]" />
      <svg viewBox="0 0 20 15" className="ml-[15px] h-[15px] w-5" fill="none" stroke="#fff" strokeWidth="2"><path d="M1 5q9-7 18 0M4 8.500q6-4.500 12 0M7 11.500q3-2 6 0" /><circle cx="10" cy="13.500" r="1" fill="#fff" stroke="none" /></svg>
      <span className="ml-[11px] w-[31px] whitespace-nowrap pt-px text-[12px] tracking-[-0.2px]">17 %</span>
      <svg viewBox="0 0 24 13" className="h-[13px] w-6" fill="none" stroke="#fff" strokeWidth="1.300"><rect x="1" y="1" width="19" height="11" rx="2" /><path d="M22.500 4.500v4" strokeWidth="2" /><path d="M3 3h7L6 7h4l-4 3H3zM18 10h-7l4-4h-4L15 3h3z" fill="#fff" stroke="none" /></svg>
      <span className="ml-[17px] w-[101px] whitespace-nowrap">Dom 9:48 p. m.</span>
      <svg viewBox="0 0 16 16" className="ml-[20px] h-4 w-4" fill="none" stroke="#fff" strokeWidth="1.500"><circle cx="6.500" cy="6.500" r="5" /><path d="M10 10l5 5.300" /></svg>
      <svg viewBox="0 0 16 16" className="ml-[17px] h-4 w-4"><circle cx="8" cy="8" r="8" fill="#f3effa" /><circle cx="8" cy="8" r="6.500" fill="#4b6fd8" /><path d="M2 8q1-6 7-6 4 1 5 5l-6 1z" fill="#d961b0" /><path d="M2 9l6-1-1 6q-4-1-5-5z" fill="#32b9df" /><path d="M3 10l10-3M8 3l1 10" stroke="#fff" /></svg>
      <svg viewBox="0 0 18 13" className="ml-3 mr-[23px] h-[13px] w-[18px]" stroke="#fff" strokeWidth="2"><path d="M0 1.500h2M0 6.500h2M0 11.500h2M4.500 1.500H18M4.500 6.500H18M4.500 11.500H18" /></svg>
    </div>
  </div>
);

export default function App() {
  return (
    <div className="relative flex h-[800px] w-[1280px] flex-col overflow-hidden bg-[#3d3a3c] font-['Noto_Sans','Open_Sans',sans-serif] text-[#191919]">
      <MenuBar />
      <div className="-mb-px flex h-[729px] shrink-0 flex-col overflow-hidden rounded-[6px]">
        <div className="flex h-[22px] shrink-0 items-center border-b border-[#b5b5b5] bg-[linear-gradient(#e6e6e6,#cfcfcf)] pl-2">
          <div className="flex gap-2">
            <i className="h-3 w-3 rounded-full bg-[#fc5b57]" />
            <i className="h-3 w-3 rounded-full bg-[#fdb946]" />
            <i className="h-3 w-3 rounded-full bg-[#09c450]" />
          </div>
          <span className="ml-[490px] whitespace-nowrap pt-[2px] font-['Inter',sans-serif] text-[12.700px] text-[#454545]">CE3_Molde2 - Ultimaker Cura</span>
        </div>
        <div className="relative flex h-[706px] flex-col">
          <Scene />
          <header className="relative flex h-[78px] shrink-0 items-start bg-[linear-gradient(90deg,#08073f_0%,#18155c_50%,#0a0843_100%)] text-white">
            <div className="ml-[14px] mt-[5px] w-[450px] whitespace-nowrap font-['Open_Sans',sans-serif] text-[28.400px] leading-[40px]">
              <span className="font-semibold">Ultimaker</span> <span className="font-light">Cura</span>
            </div>
            <div className="mt-[10px] flex h-[31px] items-center text-[14.500px] font-medium leading-5 [-webkit-text-stroke:0.2px]">
              <span className="w-[100px] pb-[2px] pl-[19px]">PREPARE</span>
              <span className="ml-[14px] flex h-[31px] w-[115px] items-center justify-center rounded-[2px] bg-white pb-[2px] text-[#0b0a48]">PREVIEW</span>
              <span className="ml-[33px] pb-[2px]">MONITOR</span>
            </div>
            <div className="ml-auto mr-[13px] mt-[13px] h-[26px] w-10 rounded-[2px] border border-white" />
          </header>
          <div className="relative -mt-[26px] ml-[52px] flex h-[54px] w-[1176px] shrink-0 rounded-[3px] border-b-2 border-[#dedede] bg-white text-[14.600px] font-medium">
            <div className="flex w-[300px] items-center border-r border-[#c3c3c3] pl-[13px] pt-[2px]">
              <span className="w-20 whitespace-nowrap font-normal text-[#7d7d7d]">View type</span>
              <span className="[-webkit-text-stroke:0.25px]">Layer view</span>
              <svg viewBox="0 0 8 13" className="mb-[3px] ml-auto mr-[15px] h-[13px] w-2" fill="none" stroke="#555" strokeWidth="1.700"><path d="M7 .800L1.300 6.500 7 12.200" /></svg>
            </div>
            <div className="flex w-[382px] items-center border-r border-[#c3c3c3] pl-[13px] pt-[2px]">
              <span className="w-[109px] whitespace-nowrap font-normal text-[#7d7d7d]">Color scheme</span>
              <span className="[-webkit-text-stroke:0.25px]">Material Color</span>
              <Pencil className="mb-[2px] ml-auto mr-[14px] h-3 w-3 text-[#666]" />
            </div>
            <div className="flex flex-1 items-center pl-[15px] pt-[2px] [-webkit-text-stroke:0.25px]">
              <svg viewBox="0 0 18 17" className="mb-[3px] h-[17px] w-[18px] fill-[#08073f]"><path d="M0 0h18v5.500H0zM0 8h13v3H0zM0 13.500h8.500v3.500H0z" /></svg>
              <span className="ml-[7px] w-[212px] whitespace-nowrap">Super Quality - 0.3mm</span>
              <svg viewBox="0 0 17 17" className="mb-[2px] h-[17px] w-[17px]" fill="none" stroke="#3c3a6b" strokeWidth=".9"><path d="M.5.500h16v16H.500zM.5 5L5 .5M.5 11L11 .5l5.500 5.500M.5 5L12 16.500M5.500 16.500L16.500 5.500M.5 11L6 16.500M11 16.500l5.500-5.500M5 .5l11.500 11" /></svg>
              <span className="ml-2 w-[51px]">20%</span>
              <svg viewBox="0 0 18 18" className="mb-[2px] h-[18px] w-[18px]"><path d="M4 0h11l-2 7 4 10h-6" fill="none" stroke="#3c3a6b" /><path d="M1 7h5v4h5v6H1z" fill="#08073f" /></svg>
              <span className="ml-2 w-[41px]">On</span>
              <svg viewBox="0 0 16 18" className="mb-[2px] h-[18px] w-4" fill="none" stroke="#3c3a6b" strokeWidth="1.100"><path d="M1 7.500q7 2.500 14 0M1 10.500H15M8 0v5M8 18v-4" /><path d="M5.500 4l2.500 3 2.500-3zM5.500 15l2.500-3 2.500 3z" fill="#08073f" stroke="none" /></svg>
              <span className="ml-2">Off</span>
              <Pencil className="mb-[2px] ml-auto mr-[14px] h-3 w-3 text-[#666]" />
            </div>
          </div>

          <main className="relative flex min-h-0 flex-1">
            <div className="flex w-[340px] flex-col">
              <div className="mt-[106px] flex h-[319px] w-[53px] shrink-0 flex-col divide-y divide-[#bcbcbc] overflow-hidden rounded-r-[3px] border border-l-0 border-[#bcbcbc] bg-white">
                {tools.map((t, i) => (
                  <div key={i} className="flex flex-1 items-center justify-center">
                    <svg viewBox="0 0 27 27" className="h-[27px] w-[27px] overflow-visible">{t}</svg>
                  </div>
                ))}
              </div>
              <div className="ml-[65px] mt-[49px] flex flex-col text-[12px] leading-[18px] text-[#555] [-webkit-text-stroke:0.15px]">
                <div className="flex items-center"><Chevron d="M.500 8L6 2.500 11.500 8" className="ml-[2px] h-[13px] w-[13px]" /><span className="ml-[13px]">Object list</span></div>
                <div className="mt-3 flex items-center"><Pencil className="h-4 w-4" /><span className="ml-[14px]">CE3_Molde2</span></div>
                <div className="mt-[7px] whitespace-nowrap">60.0 x 60.0 x 9.0 mm</div>
                <div className="ml-[5px] mt-[19px] flex gap-4">
                  {cubes.map((c, i) => <svg key={i} viewBox="0 0 16 16" className="h-4 w-4">{c}</svg>)}
                </div>
              </div>
            </div>
            <div className="flex w-[580px] items-end pb-[14px]">
              <div className="flex h-[18px] items-center">
                <svg viewBox="0 0 16 18" className="h-[18px] w-4"><path d="M.5.500L15.500 9 .5 17.500z" fill="#08073f" /></svg>
                <div className="ml-[15px] h-[6px] w-[416px] rounded-full bg-[#08073f]" />
                <div className="-ml-[3px] h-5 w-5 rounded-full bg-[#08073f]" />
              </div>
            </div>
            <div className="flex w-[360px] flex-col">
              <div className="ml-[323px] mt-[10px] flex w-7 flex-col items-center">
                <span className="relative h-[21px] w-7 border border-[#b9b9b9] bg-white text-center text-[12px] font-medium leading-[19px]">
                  30
                  <i className="absolute -bottom-[3px] left-[11px] h-[5px] w-[5px] rotate-45 border-b border-r border-[#b9b9b9] bg-white" />
                </span>
                <div className="mt-[6px] h-5 w-5 rounded-full bg-[#08073f]" />
                <div className="-my-px h-[337px] w-[6px] bg-[#08073f]" />
                <div className="h-5 w-5 rounded-full bg-[#08073f]" />
              </div>
              <div className="mt-[39px] flex h-[130px] w-[338px] flex-col rounded-[2px] border border-[#c4c4c4] bg-white px-[21px] pt-[17px]">
                <div className="flex h-[22px] items-center">
                  <svg viewBox="0 0 21 21" className="h-[21px] w-[21px]" fill="none" stroke="#08073f" strokeWidth="1.100"><circle cx="10.500" cy="10.500" r="9.900" /><path d="M10.500 4v7l3.500 4" /></svg>
                  <span className="ml-[6px] whitespace-nowrap text-[14.900px] font-bold tracking-[-0.13px]">2 hours 49 minutes</span>
                  <svg viewBox="0 0 21 21" className="ml-auto h-[21px] w-[21px]"><circle cx="10.500" cy="10.500" r="10.500" fill="#08073f" /><circle cx="11.500" cy="5.500" r="1.700" fill="#fff" /><path d="M8 9h4.500L11 15.500h2V16H8v-.800h1L10.300 10H8z" fill="#fff" stroke="#fff" strokeWidth=".6" /></svg>
                </div>
                <div className="mt-[9px] flex h-[22px] items-center">
                  <svg viewBox="0 0 18 20" className="mb-px ml-[2px] h-5 w-[18px] fill-[#08073f]"><path d="M0 0h1.800v17H0zM15.700 0h1.800v17h-1.800z" /><path opacity=".6" d="M3.800 2h1.200v13H3.800zM6.300 2h1.200v13H6.300zM9 2h1.500v18H9zM11.800 2h1v13h-1zM13.600 2h.9v13h-.9z" /></svg>
                  <span className="ml-[7px] text-[12px] font-medium [-webkit-text-stroke:0.15px]">26g · 8.78m</span>
                </div>
                <div className="mt-[8px] flex h-[34px] text-[14.600px] font-medium text-white [-webkit-text-stroke:0.2px]">
                  <div className="flex flex-1 items-center justify-center rounded-l-[2px] border-b-2 border-[#1d5fca] bg-[#2671e7] pt-[2px]">Save to File</div>
                  <div className="flex w-[25px] items-center justify-center rounded-r-[2px] border-b-2 border-[#4330c6] bg-[#1d5fca]"><Chevron d="M.5 3L6 8.500l5.500-5.500" className="h-3 w-3" /></div>
                </div>
              </div>
            </div>
          </main>
        </div>
      </div>
      <Dock />
      <div className="absolute left-[916px] top-[41px] flex h-[74px] w-[344px] overflow-hidden rounded-[6px] border border-[#28264a] bg-[linear-gradient(#38345c,#35315a_30%,#4d4a68)] font-['Inter',sans-serif] text-white shadow-md">
        <svg viewBox="0 0 32 32" className="ml-[9px] mt-[15px] h-8 w-8 shrink-0"><path d="M8 0h24v23l-9 9H0V8z" fill="#08a8e2" /><path d="M24 8h-8q-8 0-8 8t8 8h8v-5h-7q-4 0-4-3t4-3h7z" fill="#fff" /></svg>
        <div className="ml-[9px] w-[212px] shrink-0 whitespace-nowrap pt-[8px] text-[11px] font-medium leading-[14px]">
          <div className="mb-[3px] text-[12px] font-semibold">Notificaciones de “Ultimaker Cura”</div>
          <div>Las notificaciones pueden incluir</div>
          <div>avisos, sonidos e indicadores en los</div>
          <div>íconos.</div>
        </div>
        <div className="flex flex-1 flex-col divide-y divide-[#6a6787] border-l border-[#6a6787] text-center text-[12.200px] font-medium text-[#aeabc4]">
          <div className="flex h-[37px] items-center justify-center whitespace-nowrap pt-px">No permitir</div>
          <div className="flex flex-1 items-center justify-center pt-[3px]">Permitir</div>
        </div>
      </div>
    </div>
  );
}
